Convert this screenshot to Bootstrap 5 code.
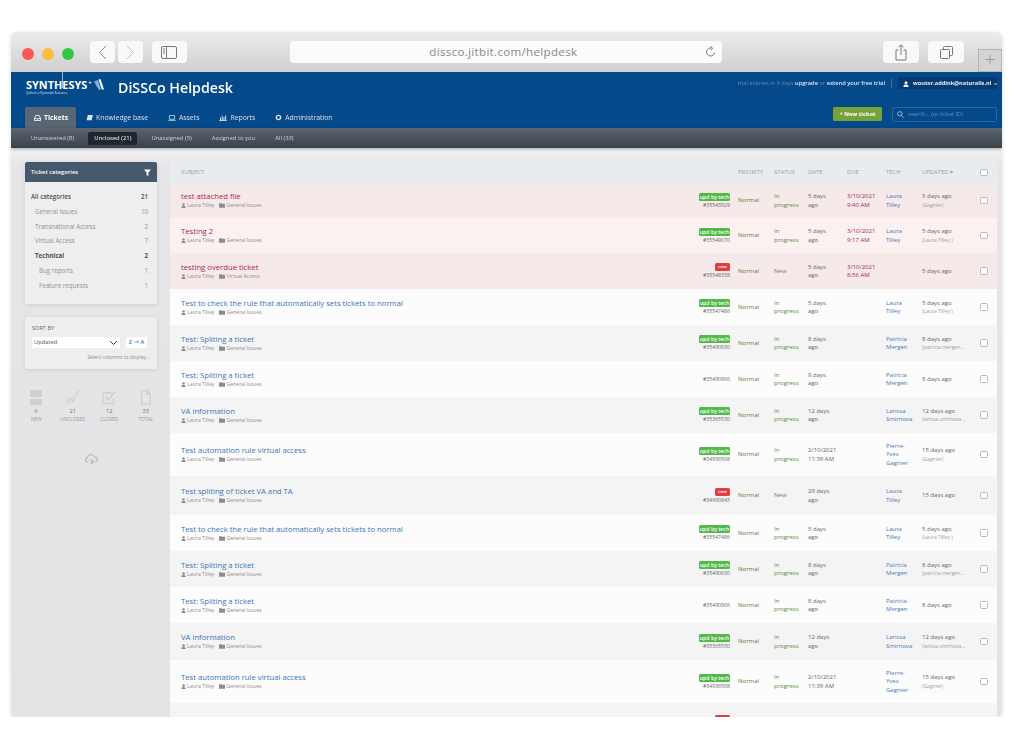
<!DOCTYPE html>
<html lang="en">
<head>
<meta charset="UTF-8">
<meta name="viewport" content="width=device-width, initial-scale=1.0">
<title>DiSSCo Helpdesk</title>
<link rel="stylesheet" href="https://cdn.jsdelivr.net/npm/bootstrap@5.3.0/dist/css/bootstrap.min.css">
<style>
    body { background: #fff; font-family: "Open Sans", sans-serif; overflow: hidden; }

    /* browser frame */
    .mac-window { width: 991px; height: 685px; margin: 32px 0 0 11px; border-radius: 6px; overflow: hidden; position: relative; box-shadow: 0 1px 4px rgba(0,0,0,.14); background: #e4e4e6; }
    .mac-bar { height: 40px; background: linear-gradient(#ececec, #cfcfcf); padding: 9px 38px 0 11px; }
    .light { width: 12px; height: 12px; border-radius: 50%; margin-top: 7px; margin-right: 8px; }
    .light-r { background: #fc5753; } .light-y { background: #fdbc40; } .light-g { background: #33c748; margin-right: 16px; }
    .mac-btn { height: 22px; background: #f9f9f9; border-radius: 4px; display: flex; align-items: center; justify-content: center; }
    .w25 { width: 25px; margin-right: 3px; }
    .w36 { width: 36px; }
    .side-toggle { margin-left: 6px; }
    .url-bar { width: 432px; height: 22px; background: #fbfbfb; border-radius: 4px; color: #8a8a8a; font-size: 11.6px; letter-spacing: .3px; margin: 0 161px 0 103px; padding-right: 6px; position: relative; line-height: 22px; text-align: center; flex: none; }
    .reload { position: absolute; right: 6px; top: 5px; }
    .mac-gap { margin-right: 9px; }
    .plus-tab { position: absolute; right: 0; top: 17px; width: 24px; height: 23px; background: #d4d4d4; border: 1px solid #b5b5b5; color: #9a9a9a; font-size: 20px; line-height: 20px; text-align: center; font-weight: 300; }
    .logo-tick { position: absolute; left: 51px; top: 40px; width: 1px; height: 16px; background: #9fb2c8; z-index: 2; }

    /* blue header */
    .blue-head { height: 56px; background: #04498a; color: #fff; position: relative; }
    .head-top { height: 35px; padding: 0 5px 0 15px; }
    .syn-logo { width: 81px; margin-top: 7px; margin-right: 11px; }
    .syn-line { display: flex; align-items: flex-start; gap: 2px; }
    .syn-name { font-size: 10.9px; font-weight: 700; line-height: 12px; white-space: nowrap; }
    .syn-plus { font-size: 6px; line-height: 8px; font-weight: 700; margin-left: -1px; }
    .syn-sub { font-size: 2.6px; line-height: 4px; color: #cfe0f0; white-space: nowrap; }
    .desk-title { font-size: 14.2px; font-weight: 600; line-height: 31px; }
    .trial-line { font-size: 5.7px; color: #5f8cb8; margin-top: 7px; }
    .trial-line b { color: #dfe9f3; font-weight: 600; }
    .trial-sep { width: 1px; height: 9px; background: #3d74a9; margin: 7px 6px 0 6px; }
    .user-box { width: 99px; height: 12px; background: #063a70; border-radius: 2px; font-size: 5.6px; font-weight: 700; line-height: 12px; margin-top: 5px; padding-left: 5px; color: #e8eef5; white-space: nowrap; }
    .head-tabs { height: 21px; padding: 0 5px 0 14px; }
    .ttab { height: 21px; font-size: 6.85px; line-height: 21px; color: #d5e1ed; padding: 0 10px; display: flex; align-items: center; gap: 3px; white-space: nowrap; text-decoration: none; }
    .ttab.on { background: #586773; border-radius: 2px 2px 0 0; color: #fff; font-weight: 700; width: 51px; padding: 0 0 0 9px; }
    .new-btn { width: 49px; height: 14px; background: #77a23a; color: #fff; font-size: 5.8px; font-weight: 700; line-height: 14px; text-align: center; border-radius: 1.5px; margin: 0 10px 0 0; }
    .find-box { width: 105px; height: 15px; border: 1px solid #2b64a0; border-radius: 2px; color: #6c93bb; font-size: 5.6px; line-height: 13px; padding-left: 4px; display: flex; align-items: center; gap: 4px; }

    .sub-nav { height: 20px; background: linear-gradient(#5b6671, #3a4149); padding-left: 14px; box-shadow: 0 1px 3px rgba(0,0,0,.3); position: relative; }
    .sub-link { font-size: 5.9px; color: #cdd3d9; line-height: 13px; padding: 0 6px; white-space: nowrap; margin-right: 8px; text-decoration: none; }
    .sub-link.on { background: #1f262e; color: #fff; border-radius: 2px; }

    /* page body */
    .page-body { height: 569px; overflow: hidden; background: linear-gradient(#f1f1f2, #e6e6e8 18px, #e3e3e5); }
    .side-col { width: 159px; padding: 14px 13px 0 14px; flex: none; }
    .side-panel { background: #eeeeef; border-radius: 2px; box-shadow: 0 1px 4px rgba(0,0,0,.1); }
    .panel-head { height: 20px; background: #46586c; color: #fff; font-size: 5.8px; font-weight: 600; line-height: 20px; padding: 0 6px; border-radius: 2px 2px 0 0; }
    .cat-list { padding: 8px 9px 6px 6px; height: 122px; }
    .cat-row { height: 14.8px; line-height: 14.8px; font-size: 6.2px; color: #8b939b; }
    .cat-row.top { color: #4a5056; font-weight: 600; }
    .cat-row.lvl1 { padding-left: 4px; }
    .cat-row.lvl2 { padding-left: 8px; }
    .cat-row.bold { color: #4a5056; font-weight: 700; }
    .sort-panel { margin-top: 13px; height: 52px; padding: 7px 7px 0 7px; }
    .sort-label { font-size: 5.6px; color: #666; line-height: 8px; margin-bottom: 5px; }
    .sort-select.form-select { width: 88px; height: 11px; min-height: 0; font-size: 5.8px; padding: 0 0 0 2px; border: 0; border-radius: 1px; line-height: 11px; color: #555; background-size: 9px 8px; background-position: right 2px center; font-family: inherit; }
    .az-btn { width: 21px; height: 11px; background: #fff; color: #3e79c0; font-size: 5.6px; font-weight: 600; line-height: 11px; text-align: center; margin-left: 6px; border-radius: 1px; white-space: nowrap; }
    .az-arrow { font-family: "DejaVu Sans", sans-serif; font-size: 6.5px; font-weight: 400; }
    .cols-link { font-size: 5px; color: #8c8c8c; text-align: right; margin-top: 5px; line-height: 8px; }
    .stat-row { margin: 21px -7px 0 -7px; }
    .stat-cell { width: 36.5px; text-align: center; color: #777; font-size: 5.8px; line-height: 8px; }
    .stat-cell span { display: block; font-size: 4.8px; color: #9a9a9a; }
    .stat-cell svg { display: block; margin: 0 auto 2px; }
    .cloud-ico { margin-top: 22px; text-align: center; }

    /* tickets table */
    .main-col { width: 827px; padding-top: 14px; flex: none; }
    .ticket-table { table-layout: fixed; width: 827px; margin: 0; border-collapse: collapse; font-size: 6px; line-height: 8.4px; color: #666; }
    .ticket-table > :not(caption) > * > * { padding: 0; border: 0; box-shadow: none; background: transparent; color: inherit; vertical-align: middle; }
    .ticket-table thead tr { height: 21px; background: #e9ecee; }
    .ticket-table thead th { font-weight: 400; color: #9aa0a5; font-size: 5.9px; }
    .ticket-table tbody tr:nth-child(even) { background: #fcfcfc; }
    .ticket-table tbody tr:nth-child(odd) { background: #f4f4f4; }
    .ticket-table tbody tr.late:nth-child(odd) { background: #f6e9e9; }
    .ticket-table tbody tr.late:nth-child(even) { background: #fbf1f1; }
    .h35 { height: 35px; } .h36 { height: 36px; } .h37 { height: 37px; } .h39 { height: 39px; } .h40 { height: 40px; } .h43 { height: 43px; }
    .cell-subj { padding-left: 11px !important; }
    .t-title { font-size: 7.7px; line-height: 10px; font-weight: 500; color: #3a75b5; white-space: nowrap; margin-bottom: 1px; margin-top: -1px; }
    .late .t-title { color: #a62c3c; }
    .t-meta { font-size: 5.2px; line-height: 7px; color: #8d8d8d; display: flex; align-items: center; gap: 1px; white-space: nowrap; }
    .t-meta svg { flex: none; }
    .t-meta i { width: 3px; }
    .cell-tag { text-align: right; font-size: 5.2px; color: #999; line-height: 7px; }
    .tag-pill { display: inline-block; color: #fff; font-size: 5.2px; font-weight: 600; line-height: 8px; border-radius: 1.5px; margin-bottom: 1px; white-space: nowrap; text-align: center; }
    .tag-upd { background: #52b848; width: 31px; }
    .tag-new { background: #e04045; width: 15px; font-size: 4.2px; }
    .cell-pri { padding-left: 8px !important; color: #55803f !important; }
    .ticket-table thead th.cell-pri { color: #9aa0a5 !important; }
    .cell-stat { padding-right: 3px !important; color: #55903f !important; }
    .cell-stat.grey { color: #777 !important; }
    .cell-date { padding-right: 5px !important; }
    .cell-due { color: #a62c3c !important; }
    .cell-tech { padding-right: 5px !important; color: #4a77b5 !important; }
    .cell-upd { white-space: nowrap; overflow: hidden; }
    .cell-upd small { display: block; font-size: 5px; line-height: 8px; color: #a0a0a0; }
    .cell-check { padding-left: 8px !important; }
    .t-check.form-check-input { width: 7.5px; height: 7.5px; margin: 0; border-color: #b9b9b9; border-radius: 1.5px; display: block; }

    .soft-focus { filter: blur(.35px); }
</style>
</head>
<body>

<div class="mac-window">
    <!-- browser chrome -->
    <div class="mac-bar d-flex align-items-start">
        <div class="light light-r"></div>
        <div class="light light-y"></div>
        <div class="light light-g"></div>
        <div class="mac-btn w25"><svg width="9" height="15" viewBox="0 0 9 15" fill="none" stroke="#8a8a8a" stroke-width="1"><path d="M8 1 1.500 7.500 8 14"/></svg></div>
        <div class="mac-btn w25"><svg width="9" height="15" viewBox="0 0 9 15" fill="none" stroke="#c2c2c2" stroke-width="1"><path d="M1 1l6.500 6.500L1 14"/></svg></div>
        <div class="mac-btn w36 side-toggle"><svg width="16" height="13" viewBox="0 0 16 13" fill="none" stroke="#777" stroke-width="1"><rect x=".5" y=".5" width="15" height="12" rx="1.500"/><path d="M5.500 .5v12M2 3h2M2 5h2M2 7h2"/></svg></div>
        <div class="url-bar">dissco.jitbit.com/helpdesk
            <svg class="reload" width="11" height="12" viewBox="0 0 11 12" fill="none" stroke="#777" stroke-width="1"><path d="M9.500 6.500a4 4 0 1 1-3-4.400"/><path d="M5.500 .3 7.700 2.200 5.700 4.200"/></svg>
        </div>
        <div class="mac-btn w36 mac-gap"><svg width="12" height="17" viewBox="0 0 12 17" fill="none" stroke="#777" stroke-width="1"><path d="M3.500 6H1v10h10V6H8.500M6 11V1M3.500 3.300 6 .8l2.500 2.500"/></svg></div>
        <div class="mac-btn w36"><svg width="13" height="13" viewBox="0 0 13 13" fill="none" stroke="#777" stroke-width="1"><rect x=".5" y="3.500" width="9" height="9" rx="1"/><path d="M3.500 3.500V1.500a1 1 0 0 1 1-1h7a1 1 0 0 1 1 1v7a1 1 0 0 1-1 1h-2"/></svg></div>
    </div>
    <div class="plus-tab">+</div>
    <div class="logo-tick"></div>

    <div class="soft-focus">
    <!-- app header -->
    <div class="blue-head">
        <div class="head-top d-flex">
            <div class="syn-logo">
                <div class="syn-line">
                    <div class="syn-name">SYNTHESYS</div>
                    <div class="syn-plus">+</div>
                    <svg width="10" height="11" viewBox="0 0 10 11"><path d="M0 2.500 4 1 7 10.500H4.500z" fill="#7fb0dc"/><path d="M4.500 .5 6.500 0 10 10.500H7.800z" fill="#fff"/></svg>
                </div>
                <div class="syn-sub">Synthesis of Systematic Resources</div>
            </div>
            <div class="desk-title">DiSSCo Helpdesk</div>
            <div class="ms-auto d-flex">
                <div class="trial-line">trial expires in 6 days <b>upgrade</b> or <b>extend your free trial</b></div>
                <div class="trial-sep"></div>
                <div class="user-box"><svg width="6" height="6" viewBox="0 0 8 8" fill="#e8eef5" class="me-1"><circle cx="4" cy="2.200" r="2"/><path d="M.5 8c0-2.500 1.500-3.300 3.500-3.300S7.500 5.500 7.500 8z"/></svg>wouter.addink@naturalis.nl ⌄</div>
            </div>
        </div>
        <div class="head-tabs d-flex align-items-start">
            <a class="ttab on" href="#"><svg width="7" height="6" viewBox="0 0 8 7" fill="none" stroke="#fff" stroke-width="1"><path d="M.5 4 2 .5h4L7.500 4v2.500h-7zM.5 4H3l.5 1h1l.5-1h2.500"/></svg>Tickets</a>
            <a class="ttab" href="#"><svg width="7" height="6" viewBox="0 0 8 7" fill="#d5e1ed"><path d="M2 0h6L6.500 6H.5z"/></svg>Knowledge base</a>
            <a class="ttab" href="#"><svg width="8" height="6" viewBox="0 0 9 7" fill="none" stroke="#d5e1ed" stroke-width=".9"><path d="M1.500 .5h6v4.500h-6zM.2 6.300h8.600"/></svg>Assets</a>
            <a class="ttab" href="#"><svg width="8" height="6" viewBox="0 0 9 7" fill="#d5e1ed"><path d="M0 6h9v1H0zM1 3h1.200v3H1zM3 1h1.200v5H3zM5 2.500h1.200V6H5zM7 .5h1.200V6H7z"/></svg>Reports</a>
            <a class="ttab" href="#"><svg width="7" height="7" viewBox="0 0 8 8" fill="none" stroke="#d5e1ed" stroke-width="1.600"><circle cx="4" cy="4" r="2.400"/></svg>Administration</a>
            <div class="new-btn ms-auto">+ New ticket</div>
            <div class="find-box"><svg width="7" height="7" viewBox="0 0 8 8" fill="none" stroke="#a9c3dc" stroke-width="1"><circle cx="3.200" cy="3.200" r="2.500"/><path d="M5 5l2.500 2.500"/></svg>search... (or ticket ID)</div>
        </div>
    </div>
    <div class="sub-nav d-flex align-items-center">
        <a class="sub-link" href="#">Unanswered (8)</a>
        <a class="sub-link on" href="#">Unclosed (21)</a>
        <a class="sub-link" href="#">Unassigned (5)</a>
        <a class="sub-link" href="#">Assigned to you</a>
        <a class="sub-link" href="#">All (33)</a>
    </div>

    <div class="page-body d-flex">
        <!-- sidebar -->
        <div class="side-col">
            <div class="side-panel">
                <div class="panel-head d-flex justify-content-between align-items-center">Ticket categories
                    <svg width="7" height="7" viewBox="0 0 8 8" fill="#fff"><path d="M0 .5h8L5 4v4L3 7V4z"/></svg>
                </div>
                <div class="cat-list">
                    <div class="cat-row top d-flex justify-content-between"><span>All categories</span><span>21</span></div>
                    <div class="cat-row lvl1 d-flex justify-content-between"><span>General Issues</span><span>10</span></div>
                    <div class="cat-row lvl1 d-flex justify-content-between"><span>Transnational Access</span><span>2</span></div>
                    <div class="cat-row lvl1 d-flex justify-content-between"><span>Virtual Access</span><span>7</span></div>
                    <div class="cat-row lvl1 bold d-flex justify-content-between"><span>Technical</span><span>2</span></div>
                    <div class="cat-row lvl2 d-flex justify-content-between"><span>Bug reports</span><span>1</span></div>
                    <div class="cat-row lvl2 d-flex justify-content-between"><span>Feature requests</span><span>1</span></div>
                </div>
            </div>
            <div class="side-panel sort-panel">
                <div class="sort-label">SORT BY</div>
                <div class="d-flex">
                    <select class="form-select sort-select"><option>Updated</option></select>
                    <div class="az-btn">Z <span class="az-arrow">→</span> A</div>
                </div>
                <div class="cols-link">Select columns to display...</div>
            </div>
            <div class="stat-row d-flex">
                <div class="stat-cell">
                    <svg width="12" height="15" viewBox="0 0 12 15" fill="#d0d0d2"><path d="M1 0h10a1 1 0 0 1 1 1v6H0V1a1 1 0 0 1 1-1zM0 9h12v5a1 1 0 0 1-1 1H1a1 1 0 0 1-1-1z"/></svg>
                    6<span>NEW</span>
                </div>
                <div class="stat-cell">
                    <svg width="14" height="15" viewBox="0 0 14 15" fill="none" stroke="#cfcfd1" stroke-width="1"><path d="M5 8.500 10 3l3-2-1.500 3.500L6.500 10zM5 8.500 2.500 8.800.8 11l3.200-.5zM6.500 10 6 13l2.200-1.800.3-3.200M3.500 11.500 1 14.500"/></svg>
                    21<span>UNCLOSED</span>
                </div>
                <div class="stat-cell">
                    <svg width="14" height="15" viewBox="0 0 14 15" fill="none" stroke="#cfcfd1" stroke-width="1.300"><path d="M11.500 8v5.500H1V3h9"/><path d="M3.500 6.500 6.500 10 13 1.500" stroke-width="1.700"/></svg>
                    12<span>CLOSED</span>
                </div>
                <div class="stat-cell">
                    <svg width="10" height="15" viewBox="0 0 10 15" fill="none" stroke="#cfcfd1" stroke-width="1.300"><path d="M.7.7h5.500l3.100 3.500v10H.7zM6 .7v3.700h3.300"/></svg>
                    33<span>TOTAL</span>
                </div>
            </div>
            <div class="cloud-ico">
                <svg width="13" height="10" viewBox="0 0 13 10" fill="none" stroke="#a9a9ab" stroke-width=".9"><path d="M3 8H2.500a2 2 0 0 1-.3-4A3.800 3.800 0 0 1 9.500 3 2.500 2.500 0 0 1 10.500 8H10"/><path d="M5 5l3 4M8 6v3H5.500"/></svg>
            </div>
        </div>

        <!-- tickets -->
        <div class="main-col">
            <table class="table ticket-table">
                <colgroup>
                    <col style="width:520px"><col style="width:40px"><col style="width:44px"><col style="width:34px"><col style="width:39px"><col style="width:39px"><col style="width:36px"><col style="width:50px"><col style="width:25px">
                </colgroup>
                <thead>
                    <tr>
                        <th class="cell-subj">SUBJECT</th>
                        <th></th>
                        <th class="cell-pri">PRIORITY</th>
                        <th>STATUS</th>
                        <th>DATE</th>
                        <th>DUE</th>
                        <th>TECH</th>
                        <th>UPDATED ▾</th>
                        <th class="cell-check"><input class="form-check-input t-check" type="checkbox"></th>
                    </tr>
                </thead>
                <tbody id="ticketRows"></tbody>
            </table>
        </div>
    </div>
    </div>
</div>

<script src="https://cdn.jsdelivr.net/npm/bootstrap@5.3.0/dist/js/bootstrap.bundle.min.js"></script>
<script>
    const userIco = '<svg width="5" height="5" viewBox="0 0 8 8" fill="#8d8d8d"><circle cx="4" cy="2.200" r="2"/><path d="M.5 8c0-2.500 1.500-3.300 3.500-3.300S7.500 5.500 7.500 8z"/></svg>';
    const folderIco = '<svg width="6" height="5" viewBox="0 0 9 7" fill="#8d8d8d"><path d="M0 0h3.500l1 1H9v6H0z"/></svg>';

    const spliting = ["Test: Spliting a ticket", "General Issues", "upd", "#35490630", "p", "8 days<br>ago", "", "Patricia Mergen", "8 days ago", "(patricia.mergen..."];
    const splitingB = ["Test: Spliting a ticket", "General Issues", "", "#35490906", "p", "8 days<br>ago", "", "Patricia Mergen", "8 days ago", ""];
    const checkRule = ["Test to check the rule that automatically sets tickets to normal", "General Issues", "upd", "#35547486", "p", "5 days<br>ago", "", "Laura Tilley", "5 days ago", "(Laura Tilley )"];
    const vaInfo = ["VA information", "General Issues", "upd", "#35365530", "p", "12 days<br>ago", "", "Larissa Smirnova", "12 days ago", "(larissa.smirnova..."];
    const autoRule = ["Test automation rule virtual access", "General Issues", "upd", "#34936568", "p", "2/10/2021<br>11:39 AM", "", "Pierre-Yves Gagnier", "15 days ago", "(Gagnier)"];
    const vaTa = ["Test spliting of ticket VA and TA", "General Issues", "new", "#34990845", "n", "29 days<br>ago", "", "Laura Tilley", "15 days ago", ""];

    const rows = [
        [35, 1, ["test attached file", "General Issues", "upd", "#35543929", "p", "5 days<br>ago", "3/10/2021<br>9:40 AM", "Laura Tilley", "5 days ago", "(Gagnier)"]],
        [35, 1, ["Testing 2", "General Issues", "upd", "#35549070", "p", "5 days<br>ago", "3/10/2021<br>9:17 AM", "Laura Tilley", "5 days ago", "(Laura Tilley )"]],
        [36, 1, ["testing overdue ticket", "Virtual Access", "new", "#35548338", "n", "5 days<br>ago", "3/10/2021<br>8:56 AM", "", "5 days ago", ""]],
        [36, 0, checkRule], [36, 0, spliting], [36, 0, splitingB], [36, 0, vaInfo], [43, 0, autoRule], [39, 0, vaTa],
        [36, 0, checkRule], [36, 0, spliting], [36, 0, splitingB], [37, 0, vaInfo], [43, 0, autoRule], [40, 0, vaTa]
    ];

    let html = "";
    rows.forEach(function (r) {
        const t = r[2];
        const tag = t[2] === "upd" ? '<span class="tag-pill tag-upd">upd by tech</span><br>' : t[2] === "new" ? '<span class="tag-pill tag-new">new</span><br>' : "";
        html += '<tr class="h' + r[0] + (r[1] ? " late" : "") + '">' +
            '<td class="cell-subj"><div class="t-title">' + t[0] + '</div><div class="t-meta">' + userIco + 'Laura Tilley<i></i>' + folderIco + t[1] + '</div></td>' +
            '<td class="cell-tag">' + tag + t[3] + '</td>' +
            '<td class="cell-pri">Normal</td>' +
            (t[4] === "p" ? '<td class="cell-stat">In progress</td>' : '<td class="cell-stat grey">New</td>') +
            '<td class="cell-date">' + t[5] + '</td>' +
            '<td class="cell-due">' + t[6] + '</td>' +
            '<td class="cell-tech">' + t[7] + '</td>' +
            '<td class="cell-upd">' + t[8] + (t[9] ? '<small>' + t[9] + '</small>' : '') + '</td>' +
            '<td class="cell-check"><input class="form-check-input t-check" type="checkbox"></td></tr>';
    });
    document.getElementById("ticketRows").innerHTML = html;
</script>
</body>
</html>
